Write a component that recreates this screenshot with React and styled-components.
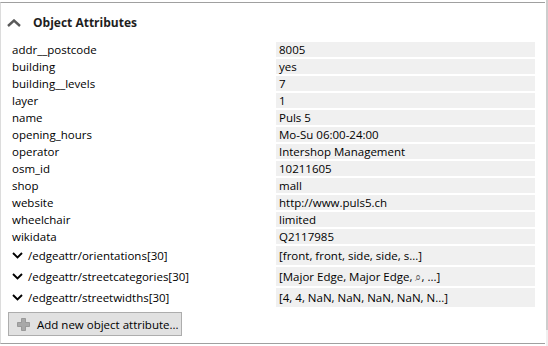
import React from 'react'
import styled, { createGlobalStyle } from 'styled-components'

const GlobalStyle = createGlobalStyle`
  html, body {
    margin: 0;
    padding: 0;
    background: #ffffff;
  }
  body {
    font-family: "Open Sans", "Noto Sans", sans-serif;
    font-size: 11.5px;
    color: #000000;
  }
`

const attributes = [
  ['addr__postcode', '8005'],
  ['building', 'yes'],
  ['building__levels', '7'],
  ['layer', '1'],
  ['name', 'Puls 5'],
  ['opening_hours', 'Mo-Su 06:00-24:00'],
  ['operator', 'Intershop Management'],
  ['osm_id', '10211605'],
  ['shop', 'mall'],
  ['website', 'http://www.puls5.ch'],
  ['wheelchair', 'limited'],
  ['wikidata', 'Q2117985'],
]

const edgeAttributes = [
  ['/edgeattr/orientations[30]', '[front, front, side, side, s...]'],
  ['/edgeattr/streetcategories[30]', '[Major Edge, Major Edge, \u2315, ...]'],
  ['/edgeattr/streetwidths[30]', '[4, 4, NaN, NaN, NaN, NaN, N...]'],
]

const Frame = styled.div`
  display: flex;
  width: 548px;
  height: 346px;
  overflow: hidden;
`

const Panel = styled.section`
  box-sizing: border-box;
  width: 545px;
  height: 342px;
  margin-top: 2px;
  border-top: 1px solid #a0a0a0;
  border-bottom: 1px solid #a0a0a0;
  border-left: 1px solid #dcdcdc;
  display: flex;
  flex-direction: column;
`

const Scrollbar = styled.div`
  width: 2px;
  margin-left: 1px;
  display: flex;
  flex-direction: column;
  div:first-child {
    height: 330px;
    background: #cdcdcd;
  }
  div:last-child {
    flex: 1;
    background: #f0f0f0;
  }
`

const Header = styled.div`
  display: flex;
  align-items: center;
  height: 39px;
  padding-left: 6px;
  gap: 12px;
  font-weight: 700;
  font-size: 12px;
  color: #1e1e1e;
`

const Table = styled.div`
  display: grid;
  grid-template-columns: 264px 259px;
  row-gap: 2px;
  padding-left: 11px;
`

const Label = styled.div`
  display: flex;
  align-items: center;
  gap: 5px;
  height: ${({ tall }) => (tall ? '19px' : '15px')};
  white-space: nowrap;
`

const Value = styled.div`
  height: ${({ tall }) => (tall ? '19px' : '15px')};
  line-height: ${({ tall }) => (tall ? '19px' : '15px')};
  padding-left: 3px;
  background: #f0f0f0;
  white-space: pre;
  overflow: hidden;
`

const Glyph = styled.span`
  font-family: "DejaVu Sans", sans-serif;
  font-size: 11px;
  color: #555555;
`

const AddButton = styled.button`
  box-sizing: border-box;
  display: flex;
  align-items: center;
  gap: 7px;
  margin: 5px 0 0 7px;
  width: 174px;
  height: 24px;
  padding: 0 0 0 8px;
  background: #e1e1e1;
  border: 1px solid #adadad;
  font: inherit;
  color: #000000;
`

const ChevronUp = () => (
  <svg width="14" height="8" viewBox="0 0 14 8">
    <path d="M1 7 L7 1.5 L13 7" fill="none" stroke="#5a5a5a" strokeWidth="2.4" />
  </svg>
)

const ChevronDown = () => (
  <svg width="11" height="7" viewBox="0 0 11 7">
    <path d="M1 1 L5.5 5.5 L10 1" fill="none" stroke="#000000" strokeWidth="1.9" />
  </svg>
)

const PlusIcon = () => (
  <svg width="13" height="13" viewBox="0 0 13 13">
    <path d="M4.5 0.5 H8.5 V4.5 H12.5 V8.5 H8.5 V12.5 H4.5 V8.5 H0.5 V4.5 H4.5 Z" fill="#a8a8a8" stroke="#8e8e8e" strokeWidth="0.8" />
  </svg>
)

const renderValue = (text) => {
  const parts = text.split('\u2315')
  if (parts.length === 1) return text
  return (
    <>
      {parts[0]}
      <Glyph>{'\u2315'}</Glyph>
      {parts[1]}
    </>
  )
}

const App = () => {
  return (
    <Frame>
      <GlobalStyle />
      <Panel>
        <Header>
          <ChevronUp />
          <span>Object Attributes</span>
        </Header>
        <Table>
          {attributes.map(([key, value]) => (
            <React.Fragment key={key}>
              <Label>{key}</Label>
              <Value>{value}</Value>
            </React.Fragment>
          ))}
          {edgeAttributes.map(([key, value]) => (
            <React.Fragment key={key}>
              <Label tall>
                <ChevronDown />
                {key}
              </Label>
              <Value tall>{renderValue(value)}</Value>
            </React.Fragment>
          ))}
        </Table>
        <AddButton>
          <PlusIcon />
          Add new object attribute...
        </AddButton>
      </Panel>
      <Scrollbar>
        <div />
        <div />
      </Scrollbar>
    </Frame>
  )
}

export default App
